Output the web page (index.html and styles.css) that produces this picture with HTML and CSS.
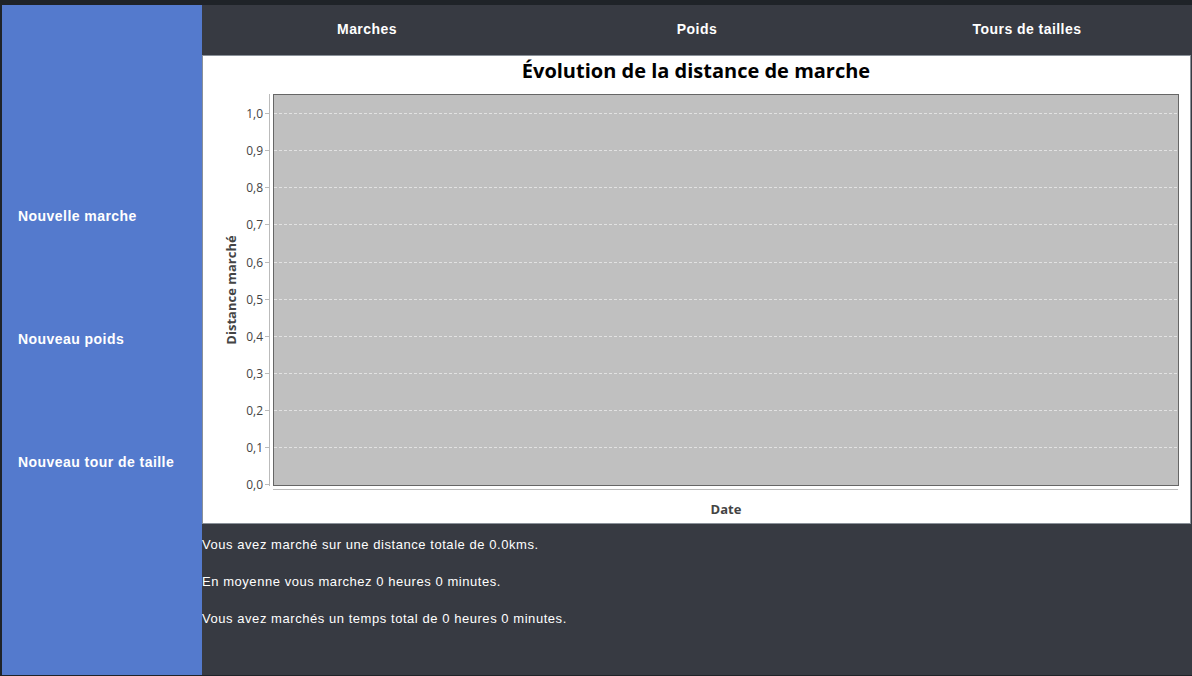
FILE: index.html
```html
<!DOCTYPE html>
<html lang="fr">
<head>
<meta charset="utf-8">
<title>Marches</title>
<link rel="stylesheet" href="styles.css">
</head>
<body>
<div class="app">
  <aside class="sidebar">
    <div class="side-item">Nouvelle marche</div>
    <div class="side-item">Nouveau poids</div>
    <div class="side-item">Nouveau tour de taille</div>
  </aside>
  <main class="main">
    <nav class="tabs">
      <div class="tab">Marches</div>
      <div class="tab">Poids</div>
      <div class="tab">Tours de tailles</div>
    </nav>
    <section class="chart-panel">
      <svg class="chart" viewBox="0 0 987 467" width="987" height="467">
        <text class="title" x="493" y="22" text-anchor="middle">Évolution de la distance de marche</text>
        <rect class="plot" x="70.5" y="38.5" width="905" height="391"/>
        <g class="grid">
          <line x1="71" x2="975" y1="57.5" y2="57.5"/>
          <line x1="71" x2="975" y1="94.5" y2="94.5"/>
          <line x1="71" x2="975" y1="131.5" y2="131.5"/>
          <line x1="71" x2="975" y1="168.5" y2="168.5"/>
          <line x1="71" x2="975" y1="206.5" y2="206.5"/>
          <line x1="71" x2="975" y1="243.5" y2="243.5"/>
          <line x1="71" x2="975" y1="280.5" y2="280.5"/>
          <line x1="71" x2="975" y1="317.5" y2="317.5"/>
          <line x1="71" x2="975" y1="354.5" y2="354.5"/>
          <line x1="71" x2="975" y1="391.5" y2="391.5"/>
        </g>
        <g class="axis">
          <line x1="66.5" x2="66.5" y1="38" y2="430"/>
          <line x1="70" x2="975" y1="433.5" y2="433.5"/>
          <line x1="62" x2="66" y1="57.5" y2="57.5"/>
          <line x1="62" x2="66" y1="94.5" y2="94.5"/>
          <line x1="62" x2="66" y1="131.5" y2="131.5"/>
          <line x1="62" x2="66" y1="168.5" y2="168.5"/>
          <line x1="62" x2="66" y1="206.5" y2="206.5"/>
          <line x1="62" x2="66" y1="243.5" y2="243.5"/>
          <line x1="62" x2="66" y1="280.5" y2="280.5"/>
          <line x1="62" x2="66" y1="317.5" y2="317.5"/>
          <line x1="62" x2="66" y1="354.5" y2="354.5"/>
          <line x1="62" x2="66" y1="391.5" y2="391.5"/>
          <line x1="62" x2="66" y1="428.5" y2="428.5"/>
        </g>
        <g class="ticks">
          <text x="60" y="62">1,0</text>
          <text x="60" y="99">0,9</text>
          <text x="60" y="136">0,8</text>
          <text x="60" y="173">0,7</text>
          <text x="60" y="211">0,6</text>
          <text x="60" y="248">0,5</text>
          <text x="60" y="285">0,4</text>
          <text x="60" y="322">0,3</text>
          <text x="60" y="359">0,2</text>
          <text x="60" y="396">0,1</text>
          <text x="60" y="433">0,0</text>
        </g>
        <text class="axis-label" x="523" y="458" text-anchor="middle">Date</text>
        <text class="axis-label" x="0" y="0" text-anchor="middle" transform="translate(33 234) rotate(-90)">Distance marché</text>
      </svg>
    </section>
    <div class="stats">
      <p class="stat">Vous avez marché sur une distance totale de 0.0kms.</p>
      <p class="stat">En moyenne vous marchez 0 heures 0 minutes.</p>
      <p class="stat">Vous avez marchés un temps total de 0 heures 0 minutes.</p>
    </div>
  </main>
</div>
</body>
</html>
```

FILE: styles.css
```css
* { box-sizing: border-box; }
html, body { margin: 0; padding: 0; }
body {
  width: 1192px;
  height: 676px;
  overflow: hidden;
  background: #1f2328;
  font-family: "Liberation Sans", Arial, sans-serif;
}
.app {
  display: flex;
  height: 675px;
  padding: 5px 0 0 2px;
}
.sidebar {
  width: 200px;
  flex: none;
  background: #547acd;
  display: flex;
  flex-direction: column;
  padding: 203px 0 0 16px;
  gap: 107px;
}
.side-item {
  color: #ffffff;
  font-weight: bold;
  font-size: 14px;
  line-height: 16px;
  letter-spacing: 0.45px;
}
.main {
  flex: 1;
  display: flex;
  flex-direction: column;
  background: #373a42;
}
.tabs {
  height: 50px;
  display: grid;
  grid-template-columns: repeat(3, 1fr);
  align-items: center;
  padding-bottom: 2px;
}
.tab {
  text-align: center;
  color: #ffffff;
  font-weight: bold;
  font-size: 14px;
  letter-spacing: 0.45px;
}
.chart-panel {
  height: 469px;
  margin-right: 1px;
  background: #ffffff;
  border: 1px solid #8a9199;
  display: flex;
}
.chart { display: block; }
.chart .title {
  font-family: "Open Sans", "Noto Sans", sans-serif;
  font-weight: bold;
  font-size: 20px;
  fill: #000000;
}
.chart .plot {
  fill: #c0c0c0;
  stroke: #666666;
  stroke-width: 1;
}
.chart .grid line {
  stroke: #e2e2e2;
  stroke-width: 1;
  stroke-dasharray: 3 2;
}
.chart .axis line {
  stroke: #bbbbbb;
  stroke-width: 1;
}
.chart .ticks text {
  font-family: "Open Sans", "Noto Sans", sans-serif;
  font-size: 12px;
  fill: #444444;
  text-anchor: end;
}
.chart .axis-label {
  font-family: "Open Sans", "Noto Sans", sans-serif;
  font-weight: bold;
  font-size: 13px;
  fill: #444444;
}
.stats {
  padding-top: 13px;
  display: flex;
  flex-direction: column;
  gap: 21px;
}
.stat {
  margin: 0;
  color: #ffffff;
  font-size: 13px;
  line-height: 16px;
  letter-spacing: 0.55px;
}
```
